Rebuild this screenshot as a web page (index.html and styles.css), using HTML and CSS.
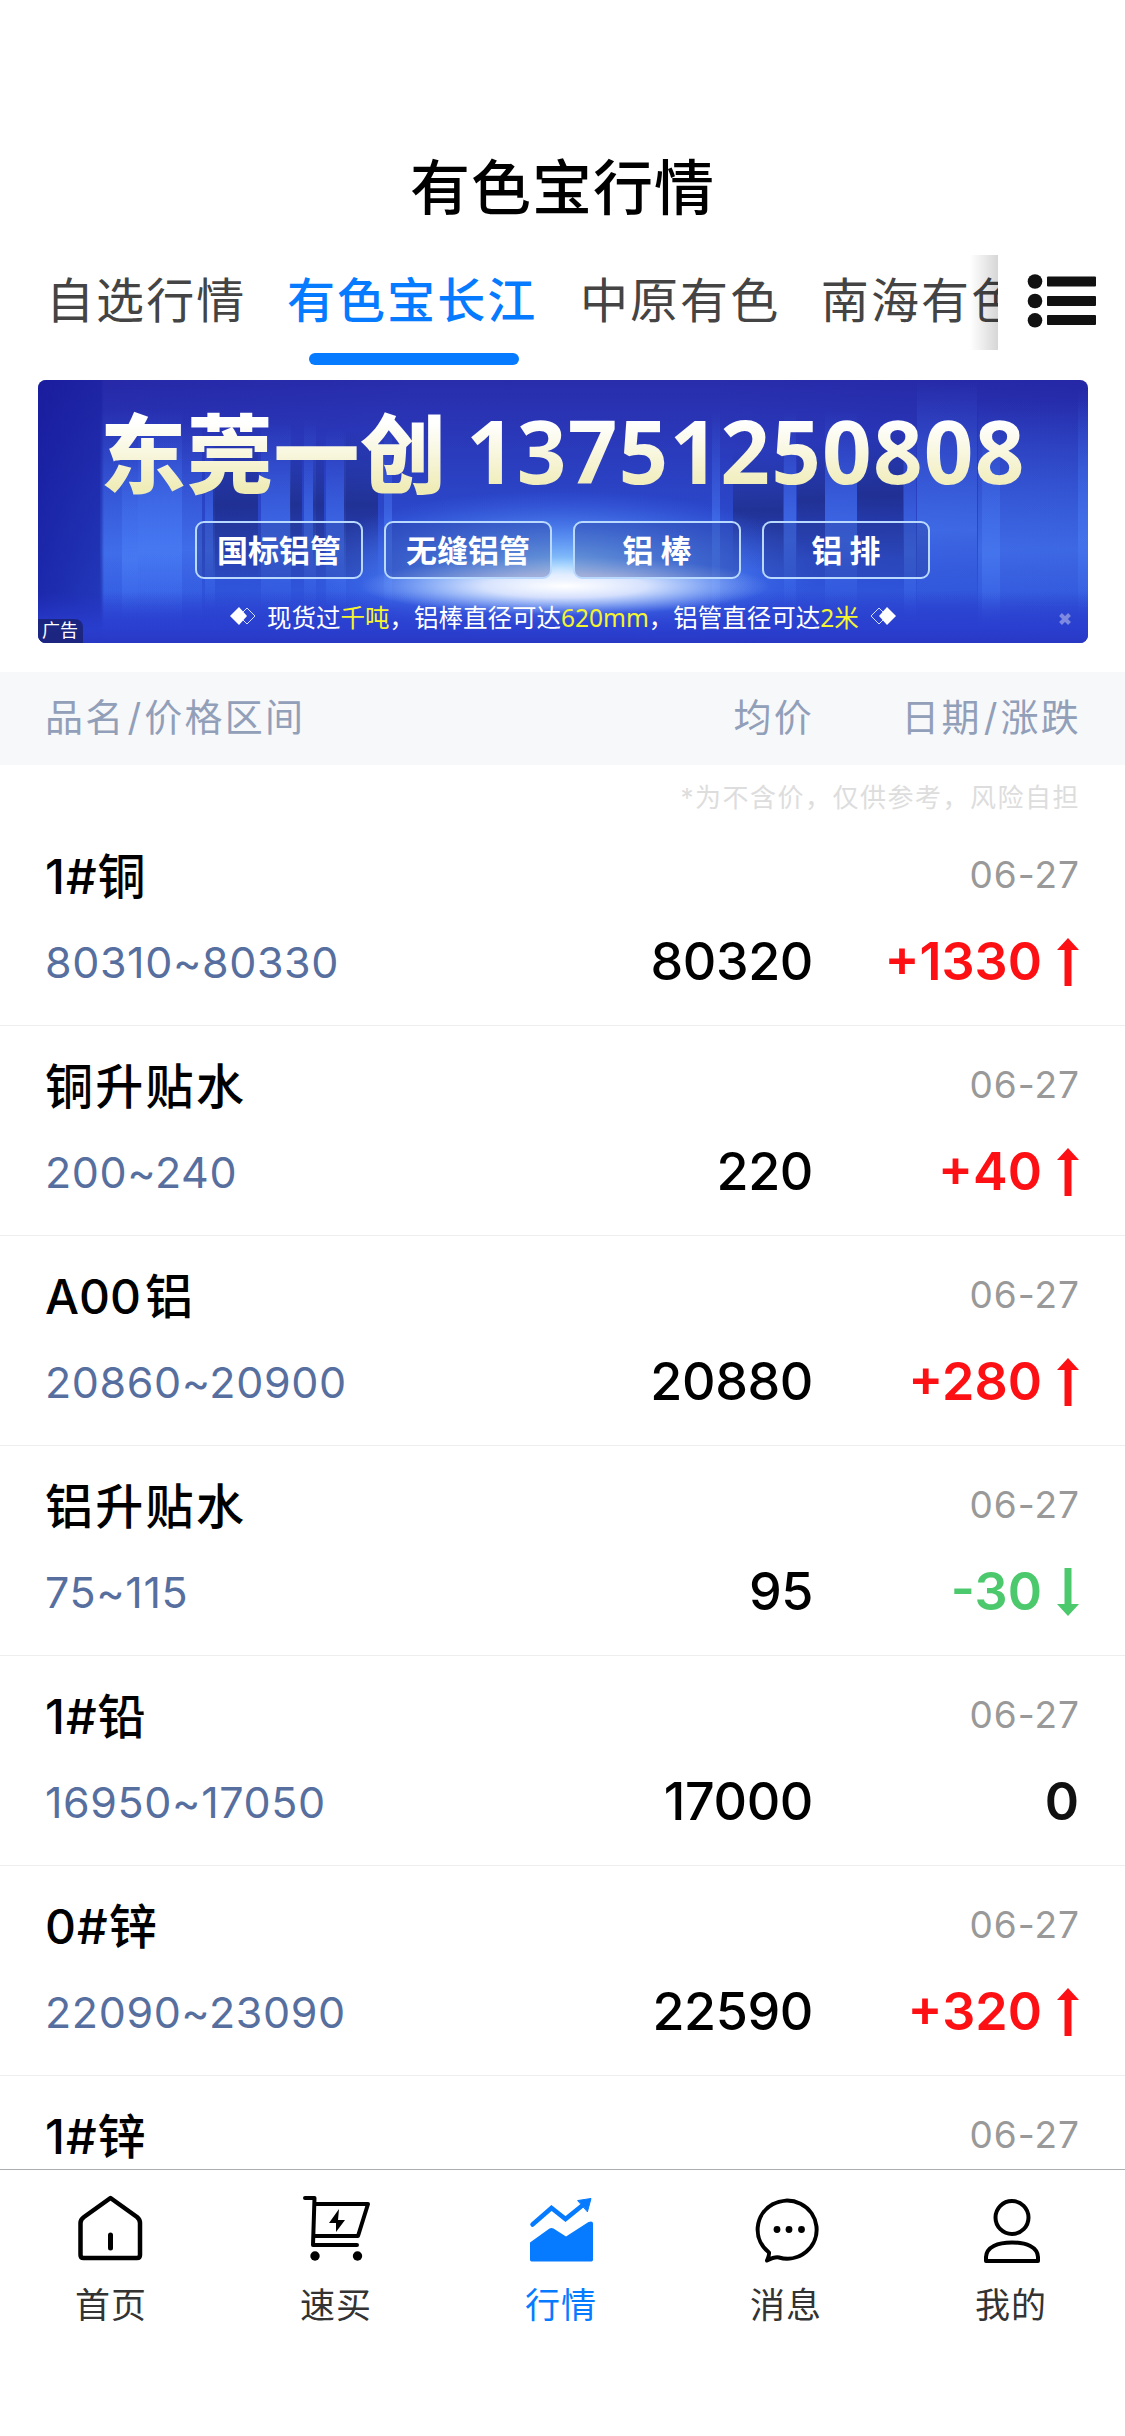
FILE: index.html
```html
<!DOCTYPE html>
<html lang="zh">
<head>
    <meta charset="UTF-8">
    <title>有色宝行情</title>
    <link rel="stylesheet" href="styles.css">
</head>
<body>
<svg class="defs" width="0" height="0">
    <symbol id="arrow" viewBox="0 0 22 48"><path d="M11 0L22 12H14.5V48H7.5V12H0Z" fill="currentColor"/></symbol>
</svg>
<div class="page">
    <h1 class="title">有色宝行情</h1>
    <div class="tabs">
        <div class="tabs-scroll">
            <a class="tab">自选行情</a>
            <a class="tab active">有色宝长江</a>
            <a class="tab">中原有色</a>
            <a class="tab">南海有色</a>
            <div class="shade"></div>
        </div>
        <svg class="menu" width="70" height="56" viewBox="0 0 70 56" fill="#111">
            <circle cx="8" cy="8.5" r="7.3"/><circle cx="8" cy="28" r="7.3"/><circle cx="8" cy="47.3" r="7.3"/>
            <rect x="20" y="3.5" width="49" height="10" rx="1"/><rect x="20" y="23" width="49" height="10" rx="1"/><rect x="20" y="42" width="49" height="10" rx="1"/>
        </svg>
    </div>

    <div class="banner">
        <svg class="banner-bg" width="1050" height="263" viewBox="0 0 1050 263">
            <defs>
                <linearGradient id="base" x1="0" y1="0" x2="0" y2="1">
                    <stop offset="0" stop-color="#2729a8"/><stop offset=".45" stop-color="#2a45c8"/>
                    <stop offset=".8" stop-color="#3059e0"/><stop offset="1" stop-color="#2a3bce"/>
                </linearGradient>
                <linearGradient id="side" x1="0" y1="0" x2="1" y2="0">
                    <stop offset="0" stop-color="#15189a" stop-opacity=".75"/><stop offset=".06" stop-color="#1820a0" stop-opacity=".6"/>
                    <stop offset=".063" stop-color="#1d25a8" stop-opacity=".1"/><stop offset=".35" stop-color="#3042c0" stop-opacity=".15"/>
                    <stop offset=".65" stop-color="#3042c0" stop-opacity=".15"/><stop offset="1" stop-color="#1a1f98" stop-opacity=".15"/>
                </linearGradient>
                <linearGradient id="lite" x1="0" y1="0" x2="0" y2="1">
                    <stop offset="0" stop-color="#4a80ff" stop-opacity="0"/><stop offset=".65" stop-color="#4f88ff" stop-opacity=".65"/>
                    <stop offset="1" stop-color="#4a80ff" stop-opacity="0"/>
                </linearGradient>
                <linearGradient id="dark" x1="0" y1="0" x2="0" y2="1">
                    <stop offset="0" stop-color="#1c2a80" stop-opacity="0"/><stop offset=".5" stop-color="#1c2a80" stop-opacity=".8"/>
                    <stop offset="1" stop-color="#1c2a80" stop-opacity="0"/>
                </linearGradient>
                <linearGradient id="floor" x1="0" y1="0" x2="0" y2="1">
                    <stop offset="0" stop-color="#2a3fd0" stop-opacity="0"/><stop offset=".7" stop-color="#2a3fd0" stop-opacity=".9"/>
                    <stop offset="1" stop-color="#2838c4"/>
                </linearGradient>
                <radialGradient id="glow">
                    <stop offset="0" stop-color="#a0dcff" stop-opacity="1"/><stop offset=".45" stop-color="#68a8ff" stop-opacity=".65"/>
                    <stop offset="1" stop-color="#3f78ff" stop-opacity="0"/>
                </radialGradient>
                <radialGradient id="core">
                    <stop offset="0" stop-color="#fff"/><stop offset=".4" stop-color="#f4f4ff" stop-opacity=".8"/>
                    <stop offset="1" stop-color="#b8d4ff" stop-opacity="0"/>
                </radialGradient>
            </defs>
            <rect width="1050" height="263" fill="url(#base)"/>
            <g fill="url(#lite)">
                <rect x="62" y="30" width="82" height="220"/><rect x="84" y="70" width="16" height="170"/>
                <rect x="100" y="40" width="64" height="200"/><rect x="167" y="60" width="10" height="170"/>
                <rect x="223" y="40" width="30" height="190"/><rect x="266" y="40" width="12" height="190"/>
                <rect x="288" y="50" width="20" height="180"/><rect x="346" y="40" width="8" height="190"/>
                <rect x="674" y="30" width="8" height="210"/><rect x="746" y="30" width="12" height="200"/>
                <rect x="787" y="30" width="32" height="200"/><rect x="866" y="50" width="12" height="190"/>
                <rect x="879" y="0" width="60" height="230"/><rect x="944" y="40" width="18" height="210"/>
                <rect x="940" y="20" width="110" height="230"/><rect x="1040" y="10" width="10" height="230"/>
            </g>
            <g fill="url(#dark)">
                <rect x="175" y="50" width="45" height="150"/><rect x="252" y="60" width="12" height="130"/>
                <rect x="275" y="60" width="11" height="130"/><rect x="306" y="50" width="34" height="150"/>
                <rect x="695" y="70" width="50" height="120"/>
                <rect x="759" y="60" width="28" height="120"/><rect x="819" y="50" width="46" height="130"/>
            </g>
            <rect width="1050" height="263" fill="url(#side)"/>
            <ellipse cx="522" cy="190" rx="260" ry="80" fill="url(#glow)"/>
            <rect y="212" width="1050" height="51" fill="url(#floor)"/>
            <ellipse cx="527" cy="206" rx="205" ry="29" fill="url(#core)"/>
        </svg>
        <div class="banner-body">
            <div class="banner-head"><span class="company">东莞一创</span><span class="phone">13751250808</span></div>
            <div class="goods">
                <span>国标铝管</span><span>无缝铝管</span><span>铝 棒</span><span>铝 排</span>
            </div>
            <div class="slogan">
                <svg width="26" height="18" viewBox="0 0 26 18"><path d="M17 1L25 9L17 17L9 9Z" fill="none" stroke="#cfe0ff"/><path d="M9 0L17 9L9 18L0 9Z" fill="#fff"/></svg>
                <p>现货过<em>千吨</em>，铝棒直径可达<em>620mm</em>，铝管直径可达<em>2米</em></p>
                <svg width="26" height="18" viewBox="0 0 26 18"><path d="M9 1L17 9L9 17L1 9Z" fill="none" stroke="#cfe0ff"/><path d="M17 0L26 9L17 18L9 9Z" fill="#fff"/></svg>
            </div>
        </div>
        <span class="ad">广告</span>
        <svg class="close" width="12" height="12" viewBox="0 0 12 12"><path d="M1.5 1.5L10.5 10.5M10.5 1.5L1.5 10.5" stroke="#7d8ae0" stroke-width="4"/></svg>
    </div>

    <div class="head">
        <span class="c1">品名<b>/</b>价格区间</span><span class="c2">均价</span><span class="c3">日期<b>/</b>涨跌</span>
    </div>
    <div class="list">
        <p class="note">*为不含价，仅供参考，风险自担</p>
        <div class="item">
            <div class="line"><span class="name"><i>1#</i>铜</span><span class="date">06-27</span></div>
            <div class="line"><span class="range">80310~80330</span><span class="avg">80320</span><span class="change up">+1330<svg class="arrow"><use href="#arrow"/></svg></span></div>
        </div>
        <div class="item">
            <div class="line"><span class="name">铜升贴水</span><span class="date">06-27</span></div>
            <div class="line"><span class="range">200~240</span><span class="avg">220</span><span class="change up">+40<svg class="arrow"><use href="#arrow"/></svg></span></div>
        </div>
        <div class="item">
            <div class="line"><span class="name"><i class="gap">A00</i>铝</span><span class="date">06-27</span></div>
            <div class="line"><span class="range">20860~20900</span><span class="avg">20880</span><span class="change up">+280<svg class="arrow"><use href="#arrow"/></svg></span></div>
        </div>
        <div class="item">
            <div class="line"><span class="name">铝升贴水</span><span class="date">06-27</span></div>
            <div class="line"><span class="range">75~115</span><span class="avg">95</span><span class="change down">-30<svg class="arrow"><use href="#arrow"/></svg></span></div>
        </div>
        <div class="item">
            <div class="line"><span class="name"><i>1#</i>铅</span><span class="date">06-27</span></div>
            <div class="line"><span class="range">16950~17050</span><span class="avg">17000</span><span class="change">0</span></div>
        </div>
        <div class="item">
            <div class="line"><span class="name"><i>0#</i>锌</span><span class="date">06-27</span></div>
            <div class="line"><span class="range">22090~23090</span><span class="avg">22590</span><span class="change up">+320<svg class="arrow"><use href="#arrow"/></svg></span></div>
        </div>
        <div class="item">
            <div class="line"><span class="name"><i>1#</i>锌</span><span class="date">06-27</span></div>
        </div>
    </div>

    <div class="nav">
        <a class="nav-item">
            <svg width="72" height="72" viewBox="0 0 72 72" fill="none" stroke="#000" stroke-width="4.500" stroke-linejoin="round" stroke-linecap="round"><path d="M33.500 6L60 25Q63 27.500 63 31V63Q63 66 60 66H6.500Q3.500 66 3.500 63V31Q3.500 27.500 7 25Z" /><path d="M33.500 43V56" stroke-width="5"/></svg>
            <span>首页</span>
        </a>
        <a class="nav-item">
            <svg width="72" height="72" viewBox="0 0 72 72" fill="none" stroke="#000" stroke-width="4" stroke-linejoin="round" stroke-linecap="round"><path d="M3 6H12.500L11 53H55M12.500 12H66L56 44H11.500"/><path d="M37 17L27 31H34V40L43 28H36Z" fill="#000" stroke="none"/><circle cx="13" cy="64" r="4.700" fill="#000" stroke="none"/><circle cx="55.500" cy="64" r="4.700" fill="#000" stroke="none"/></svg>
            <span>速买</span>
        </a>
        <a class="nav-item active">
            <svg width="72" height="72" viewBox="1.500 -0.500 72 72" fill="none" stroke="#067bff" stroke-width="4.500" stroke-linecap="round"><path d="M7 32L26 15.500L40 26.500L58 12"/><path d="M52.500 8L65.500 6L62 19Z" fill="#067bff" stroke-width="1"/><path d="M4.500 50L24 36Q26 35 28 36L40.500 44L63 29.500Q67.500 28 67.500 31V67Q67.500 69 66 69H6Q4.500 69 4.500 67Z" fill="#067bff" stroke="none"/></svg>
            <span>行情</span>
        </a>
        <a class="nav-item">
            <svg width="72" height="72" viewBox="0 -0.500 72 72" fill="none" stroke="#000" stroke-width="4" stroke-linejoin="round"><path d="M17 60A29.500 29 0 1 1 27 65Q23 64 15 68Q17.500 62 17 60Z"/><g fill="#000" stroke="none"><circle cx="25" cy="37" r="3.400"/><circle cx="37" cy="37" r="3.400"/><circle cx="49.500" cy="37" r="3.400"/></g></svg>
            <span>消息</span>
        </a>
        <a class="nav-item">
            <svg width="72" height="72" viewBox="1.500 -1 72 72" fill="none" stroke="#000" stroke-width="4"><ellipse cx="36.500" cy="24.500" rx="16.500" ry="16.500"/><path d="M10.500 68V64C11 54 22 49.500 36.500 49.500S62 54 62.500 64V68Z" stroke-linejoin="round"/></svg>
            <span>我的</span>
        </a>
    </div>
</div>
</body>
</html>
```
FILE: styles.css
```css
* {
    box-sizing: border-box;
    margin: 0;
    padding: 0;
}

body {
    font-family: Inter, "Noto Sans CJK SC", sans-serif;
    background: #fff;
    color: #000;
}

.defs {
    display: block;
}

.page {
    width: 1125px;
    height: 2436px;
    overflow: hidden;
    display: flex;
    flex-direction: column;
}

.title {
    flex: none;
    height: 115px;
    margin-top: 130px;
    line-height: 117px;
    text-align: center;
    font-size: 60px;
    font-weight: 500;
    letter-spacing: 1px;
}

/* 顶部分类 */
.tabs {
    flex: none;
    height: 125px;
    margin-top: 10px;
    display: flex;
}

.tabs-scroll {
    position: relative;
    width: 998px;
    padding-left: 46px;
    display: flex;
    gap: 40.5px;
    overflow: hidden;
}

.tab {
    flex: none;
    height: 110px;
    line-height: 92px;
    font-size: 48px;
    letter-spacing: 2.1px;
    color: #444;
    white-space: nowrap;
}

.tab.active {
    color: #067bff;
    font-weight: 500;
    margin-right: 2px;
}

.tab.active::after {
    content: "";
    display: block;
    width: 210px;
    height: 12px;
    margin: 6px 0 0 22px;
    border-radius: 6px;
    background: #067bff;
}

.shade {
    position: absolute;
    right: 0;
    top: 0;
    width: 28px;
    height: 95px;
    background: linear-gradient(to right, rgba(0, 0, 0, 0), rgba(0, 0, 0, .16));
}

.menu {
    margin: 18px 0 0 29px;
}

/* 广告 */
.banner {
    flex: none;
    position: relative;
    width: 1050px;
    height: 263px;
    margin-left: 38px;
    border-radius: 8px;
    overflow: hidden;
}

.banner-bg {
    position: absolute;
    left: 0;
    top: 0;
}

.banner-body {
    position: relative;
    color: #fff;
}

.banner-head {
    height: 141px;
    padding: 17px 0 0 62px;
    display: flex;
    line-height: 106px;
    background: linear-gradient(#fff 30%, #eeeab0 82%);
    -webkit-background-clip: text;
    background-clip: text;
    color: transparent;
}

.company {
    width: 366px;
    font-size: 86px;
    font-weight: 900;
    letter-spacing: .7px;
    white-space: nowrap;
    font-family: "Noto Sans CJK SC", sans-serif;
}

.phone {
    font-family: "Noto Sans", sans-serif;
    font-weight: 700;
    font-size: 87px;
    letter-spacing: 1.1px;
}

.goods {
    display: flex;
    gap: 21px;
    padding-left: 157px;
}

.goods span {
    width: 168px;
    height: 58px;
    line-height: 51px;
    border: 2px solid #b9d9ff;
    border-radius: 9px;
    background: rgba(40, 60, 150, .35);
    text-align: center;
    font-family: "Noto Sans CJK SC", sans-serif;
    font-size: 31px;
    font-weight: 700;
}

.slogan {
    display: flex;
    align-items: center;
    height: 36px;
    margin-top: 19px;
    padding-left: 192px;
    gap: 11px;
    font-size: 24.5px;
    white-space: nowrap;
    font-family: "Noto Sans", "Noto Sans CJK SC", sans-serif;
}

.slogan em {
    font-style: normal;
    color: #f4f430;
}

.ad {
    position: absolute;
    left: 0;
    bottom: 0;
    width: 45px;
    height: 24px;
    line-height: 24px;
    padding-left: 4px;
    border-radius: 0 8px 0 0;
    background: rgba(20, 25, 80, .6);
    color: #fff;
    font-size: 18px;
}

.close {
    position: absolute;
    right: 17px;
    bottom: 18px;
}

/* 表头 */
.head {
    flex: none;
    display: flex;
    height: 93px;
    line-height: 91px;
    margin-top: 29px;
    padding: 0 44px 0 45px;
    background: #f7f8fa;
    color: #929fb9;
    font-size: 38px;
    letter-spacing: 2.2px;
}

.head b {
    font-weight: 400;
    margin: 0 1px 0 2px;
}

.c1 {
    width: 400px;
}

.c2 {
    width: 369px;
    text-align: right;
}

.c3 {
    flex: 1;
    text-align: right;
}

/* 行情列表 */
.list {
    flex: none;
    height: 1404px;
    overflow: hidden;
}

.note {
    height: 51px;
    line-height: 65px;
    padding-right: 45px;
    text-align: right;
    font-size: 26px;
    letter-spacing: 1.5px;
    color: #ddd;
}

.item {
    height: 210px;
    padding: 19px 45px 0;
    border-bottom: 1px solid #eee;
}

.line {
    display: flex;
    align-items: center;
    height: 76px;
}

.line + .line {
    height: 101px;
}

.name {
    font-size: 48px;
    font-weight: 500;
    letter-spacing: 2.3px;
}

.name i {
    font-style: normal;
    letter-spacing: 1px;
}

.name .gap {
    margin-right: 4px;
    letter-spacing: 0;
}

.date {
    margin-left: auto;
    padding: 3px 0 0;
    font-size: 37px;
    letter-spacing: 1px;
    color: #999;
}

.range {
    width: 400px;
    font-size: 43px;
    letter-spacing: .6px;
    color: #576f9f;
}

.avg {
    width: 368px;
    text-align: right;
    font-size: 52px;
    font-weight: 500;
    letter-spacing: -.4px;
}

.change {
    flex: 1;
    display: flex;
    justify-content: flex-end;
    align-items: center;
    padding-right: 1px;
    font-size: 52px;
    font-weight: 600;
    color: #111;
}

.arrow {
    width: 22px;
    height: 48px;
    margin-left: 15px;
}

.up {
    color: #fd1014;
}

.down {
    color: #4cc96c;
}

.down .arrow {
    transform: rotate(180deg);
}

/* 底部导航 */
.nav {
    flex: 1;
    display: flex;
    border-top: 1px solid #aaaeae;
    background: #fff;
}

.nav-item {
    width: 225px;
    padding-top: 22px;
    display: flex;
    flex-direction: column;
    align-items: center;
    font-size: 35px;
    color: #333;
}

.nav-item span {
    line-height: 50px;
    margin-top: 16px;
    margin-right: 3px;
    letter-spacing: 1px;
}

.nav-item.active {
    color: #067bff;
}
```
